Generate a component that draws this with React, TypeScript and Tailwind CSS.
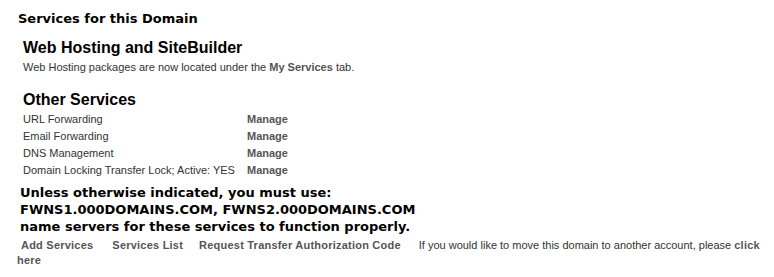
export default function App() {
  const services = [
    "URL Forwarding",
    "Email Forwarding",
    "DNS Management",
    "Domain Locking Transfer Lock; Active: YES",
  ];

  return (
    <div className="w-[774px] h-[277px] bg-white overflow-hidden font-['Liberation_Sans',Arial,sans-serif] text-[#333]">
      <div className="pl-[18px] pt-[10px]">
        <h1 className="font-['DejaVu_Sans',sans-serif] font-bold text-[13px] leading-[17px] text-black">
          Services for this Domain
        </h1>
      </div>

      {/* Web hosting block */}
      <div className="pl-[23px] pt-[11px]">
        <h2 className="font-bold text-[16px] leading-[20px] text-black">Web Hosting and SiteBuilder</h2>
        <p className="text-[11px] leading-[14px] mt-[2px]">
          Web Hosting packages are now located under the <b className="text-[#555]">My Services</b> tab.
        </p>

        <h2 className="font-bold text-[16px] leading-[20px] text-black mt-[16px]">Other Services</h2>
        <table className="mt-[1px] text-[11px]">
          <tbody>
            {services.map(s => (
              <tr key={s} className="h-[17px]">
                <td className="w-[224px] pr-2 whitespace-nowrap">{s}</td>
                <td className="font-bold text-[#555]">Manage</td>
              </tr>
            ))}
          </tbody>
        </table>
      </div>

      {/* Name server notice */}
      <div className="pl-[20px] mt-[5px] font-['DejaVu_Sans',sans-serif] font-bold text-[13px] leading-[17px] text-black">
        <p>Unless otherwise indicated, you must use:</p>
        <p>FWNS1.000DOMAINS.COM, FWNS2.000DOMAINS.COM</p>
        <p>name servers for these services to function properly.</p>
      </div>

      {/* Bottom links */}
      <p className="pl-[17px] pr-[8px] mt-[3px] text-[11px] leading-[15px] indent-[4px]">
        <b className="text-[#555] tracking-[0.22px]">Add Services</b>
        <b className="text-[#555] tracking-[0.22px] ml-[19px]">Services List</b>
        <b className="text-[#555] tracking-[0.22px] ml-[16px]">Request Transfer Authorization Code</b>
        <span className="ml-[18px]">If you would like to move this domain to another account, please</span>{" "}
        <b className="text-[#555] tracking-[0.22px]">click</b>{" "}
        <b className="text-[#555] tracking-[0.22px]">here</b>
      </p>
    </div>
  );
}
